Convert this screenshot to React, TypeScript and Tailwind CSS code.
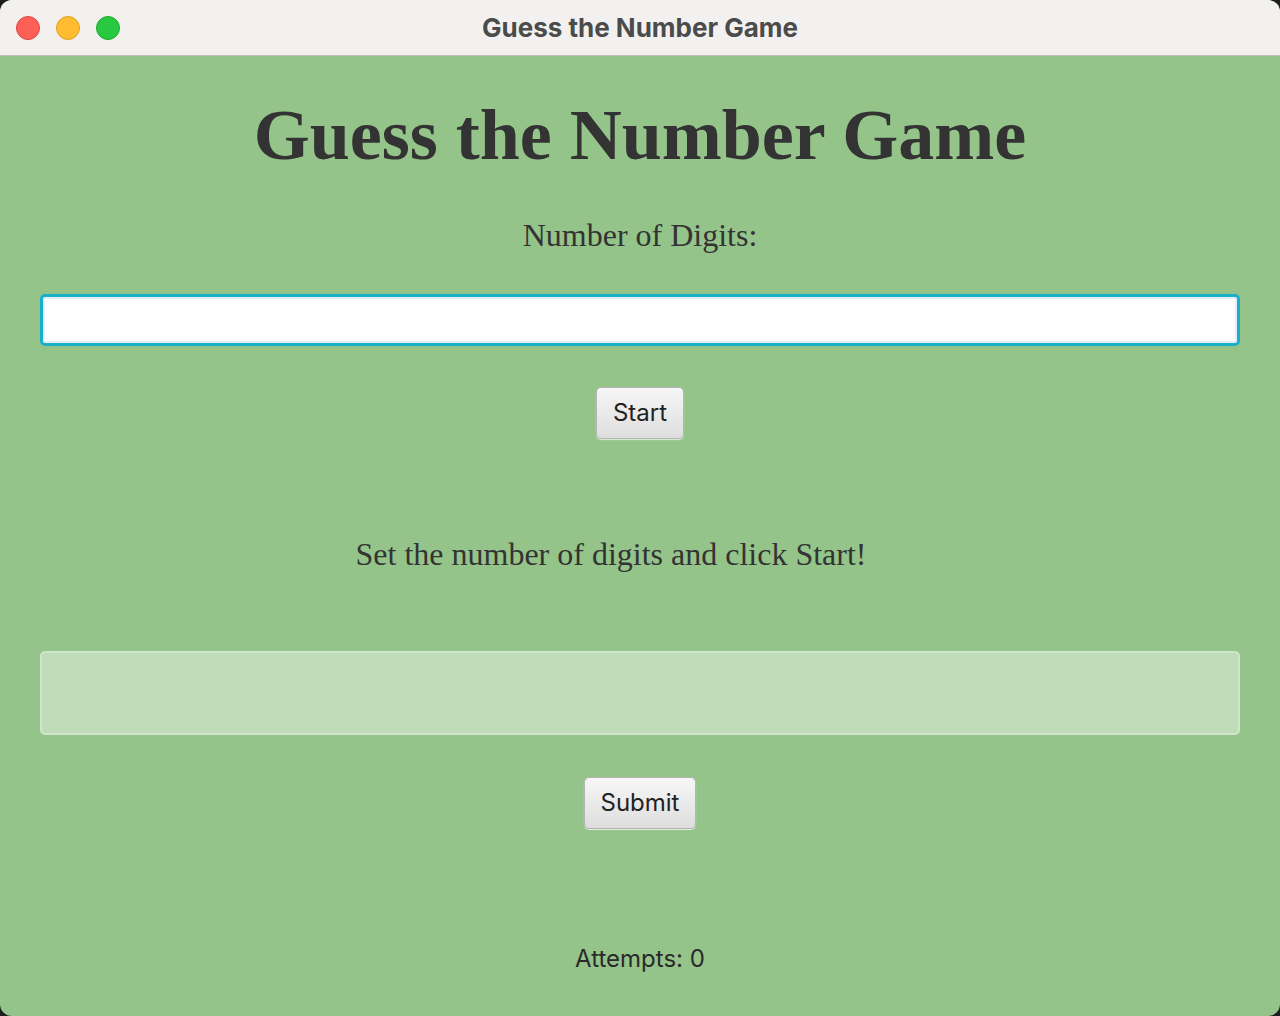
import { useState } from 'react';

const serif = { fontFamily: '"Liberation Serif", "Times New Roman", serif' };

const App = () => {
  const [digits, setDigits] = useState('');
  const [guess, setGuess] = useState('');
  const [attempts] = useState(0);

  return (
    <div className="w-[1280px] h-[1016px] bg-[#1e1e1e]">
      <div className="w-full h-full rounded-[12px] overflow-hidden flex flex-col bg-[#95c48a]">
        <header className="relative h-[56px] shrink-0 bg-[#f2f1ef] border-b border-[#bfbfbf] flex items-center justify-center">
          <div className="absolute left-[16px] top-[16px] flex gap-[16px]">
            <span className="w-[24px] h-[24px] rounded-full bg-[#fe5f57] border border-[#e0443e]" />
            <span className="w-[24px] h-[24px] rounded-full bg-[#febc2e] border border-[#dea123]" />
            <span className="w-[24px] h-[24px] rounded-full bg-[#28c840] border border-[#1aab29]" />
          </div>
          <span className="font-['Inter',sans-serif] font-bold text-[26px] text-[#4b4b4b]">
            Guess the Number Game
          </span>
        </header>

        <main className="flex-1 flex flex-col items-center px-[40px] text-[#333333]">
          <h1 style={serif} className="mt-[36px] h-[86px] leading-[86px] text-[72px] font-bold">
            Guess the Number Game
          </h1>
          <p style={serif} className="mt-[39px] h-[36px] leading-[36px] text-[32px]">
            Number of Digits:
          </p>
          <input
            value={digits}
            onChange={(e) => setDigits(e.target.value)}
            className="mt-[41px] w-full h-[52px] bg-white rounded-[5px] border-[3px] border-[#1aafc8] shadow-[inset_0_0_0_2px_#e3f1fb] outline-none px-3 text-[24px]"
          />
          <button className="mt-[41px] h-[52px] px-[16px] rounded-[5px] border border-[#b5b5b5] bg-gradient-to-b from-[#f7f7f7] to-[#dedede] shadow-[0_1px_1px_rgba(255,255,255,0.7)] font-['Inter',sans-serif] text-[24px] text-[#222]">
            Start
          </button>
          <p style={serif} className="mt-[97px] -ml-[58px] h-[36px] leading-[36px] text-[32px]">
            Set the number of digits and click Start!
          </p>
          <textarea
            value={guess}
            onChange={(e) => setGuess(e.target.value)}
            className="mt-[79px] w-full h-[84px] resize-none rounded-[5px] border-[2px] border-[#cfe5c9] bg-[#bfdcb8] outline-none"
          />
          <button className="mt-[42px] h-[52px] px-[16px] rounded-[5px] border border-[#b5b5b5] bg-gradient-to-b from-[#f7f7f7] to-[#dedede] shadow-[0_1px_1px_rgba(255,255,255,0.7)] font-['Inter',sans-serif] text-[24px] text-[#222]">
            Submit
          </button>
          <p className="mt-[112px] h-[36px] leading-[36px] font-['Inter',sans-serif] text-[24px] text-[#2a2a2a]">
            Attempts: {attempts}
          </p>
        </main>
      </div>
    </div>
  );
};

export default App;
